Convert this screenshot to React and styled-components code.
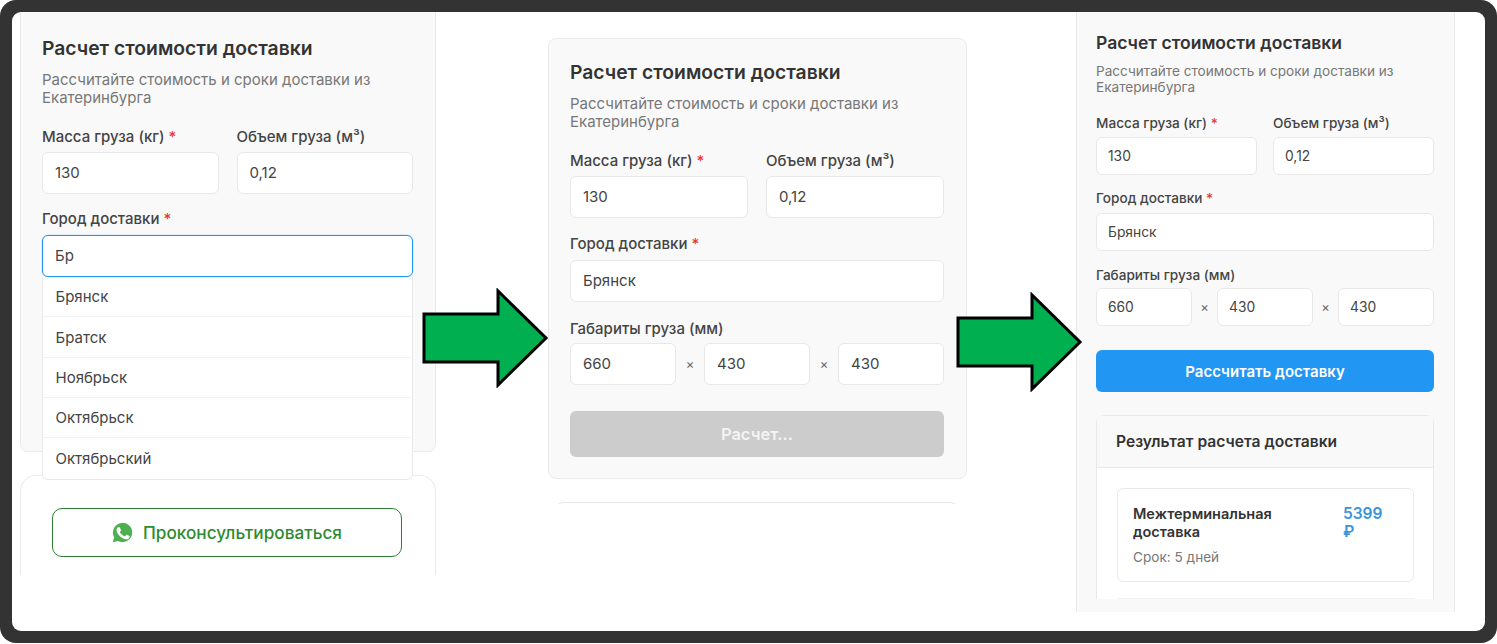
import React from "react";
import styled, { createGlobalStyle, ThemeProvider } from "styled-components";

const regular = {
  pad: "22px", padLeft: "21px", padBottom: "21px", titleSize: "19.3px", titleLine: "22px", titleGap: "12px",
  subSize: "15px", subLine: "18px", labelSize: "15px", labelLine: "18px",
  fieldSize: "15px", fieldLift: "2px", firstGap: "21px", gapCol: "18px", inputH: "42px", inputPad: "12px",
  labelGap: "6px", crossW: "28px", btnGap: "26px", btnH: "46px", btnSize: "16.5px", radius: "6px",
};
const compact = {
  pad: "20px", padLeft: "19px", padBottom: "21px", titleSize: "17.55px", titleLine: "20px", titleGap: "10px",
  subSize: "13.6px", subLine: "16px", labelSize: "13.6px", labelLine: "16px",
  fieldSize: "13.8px", fieldLift: "0px", firstGap: "20px", gapCol: "16px", inputH: "38px", inputPad: "11px",
  labelGap: "6px", crossW: "25px", btnGap: "24px", btnH: "42px", btnSize: "15px", radius: "6px",
};

const Global = createGlobalStyle`
  html, body { margin: 0; background: #fff; }
  body { font-family: Inter, "Noto Sans", sans-serif; color: #333; }
  * { box-sizing: border-box; }
`;

const Frame = styled.div`
  width: 1497px; height: 643px;
  background: #333; border-radius: 16px; padding: 12px;
`;
const Canvas = styled.div`
  position: relative; width: 100%; height: 100%;
  background: #fff; border-radius: 9px; overflow: hidden;
`;
const Shot = styled.div`
  position: absolute; overflow: hidden;
  left: ${(p) => p.$left}px; top: ${(p) => p.$top}px;
  width: ${(p) => p.$width}px; height: ${(p) => p.$height}px;
`;
const Panel = styled.section`
  position: relative;
  background: #f9f9f9;
  border: 1px solid #ebebeb;
  border-top-width: ${(p) => (p.$cut ? 0 : "1px")};
  border-bottom-width: ${(p) => (p.$open ? 0 : "1px")};
  border-radius: ${(p) => (p.$cut ? "0 0 8px 8px" : "8px")};
  padding: ${(p) => p.$top ?? p.theme.pad} ${(p) => p.theme.pad} ${(p) => p.theme.padBottom} ${(p) => p.theme.padLeft};
  min-height: ${(p) => p.$minH ?? "auto"};
`;
const Title = styled.h2`
  margin: 0; font-size: ${(p) => p.theme.titleSize}; line-height: ${(p) => p.theme.titleLine};
  font-weight: 600; color: #333;
`;
const Sub = styled.p`
  margin: ${(p) => p.theme.titleGap} 0 ${(p) => p.theme.firstGap};
  font-size: ${(p) => p.theme.subSize}; line-height: ${(p) => p.theme.subLine}; color: #777;
`;
const Pair = styled.div`
  display: grid; grid-template-columns: 1fr 1fr; column-gap: ${(p) => p.theme.gapCol};
`;
const Label = styled.div`
  font-size: ${(p) => p.theme.labelSize}; line-height: ${(p) => p.theme.labelLine};
  font-weight: 500; color: #444;
  margin-top: ${(p) => p.$gap ?? 0};
  margin-bottom: ${(p) => p.$below ?? p.theme.labelGap};
`;
const Req = styled.span`color: #e53935;`;
const Field = styled.div`
  position: relative; z-index: ${(p) => (p.$focus ? 4 : "auto")};
  height: ${(p) => p.theme.inputH};
  display: flex; align-items: center;
  background: #fff;
  border: 1px solid ${(p) => (p.$focus ? "#2196f3" : "#e8e8e8")};
  box-shadow: ${(p) => (p.$focus ? "0 0 0 1px rgba(33,150,243,.12)" : "none")};
  border-radius: ${(p) => p.theme.radius};
  padding: 0 ${(p) => p.theme.inputPad} ${(p) => p.theme.fieldLift};
  font-size: ${(p) => p.theme.fieldSize}; color: #444;
  flex: 1 1 0; min-width: 0;
`;
const Dims = styled.div`display: flex; align-items: center;`;
const Cross = styled.span`
  width: ${(p) => p.theme.crossW}; text-align: center; font-size: 13px; color: #666; flex: none;
`;
const Submit = styled.div`
  margin-top: ${(p) => p.theme.btnGap}; height: ${(p) => p.theme.btnH};
  display: flex; align-items: center; justify-content: center;
  border-radius: ${(p) => p.theme.radius};
  background: ${(p) => (p.$busy ? "#cccccc" : "#2196f3")};
  color: ${(p) => (p.$busy ? "rgba(255,255,255,.8)" : "#fff")};
  font-size: ${(p) => p.theme.btnSize}; font-weight: 600;
`;
const CityWrap = styled.div`position: relative;`;
const Dropdown = styled.ul`
  position: absolute; top: 100%; left: 0; right: 0; margin: 0; padding: 0; list-style: none;
  background: #fff; border: 1px solid #e9e9e9; border-top: 0; border-radius: 0 0 6px 6px;
  z-index: 3;
`;
const Option = styled.li`
  height: 40.35px; display: flex; align-items: center; padding: 0 12.5px;
  font-size: 15px; color: #444;
  border-bottom: ${(p) => (p.$last ? 0 : "1px solid #f3f3f3")};
`;
const ConsultCard = styled.div`
  margin-top: 23px; background: #fff;
  border: 1px solid #ebebeb; border-bottom: 0; border-radius: 16px 16px 0 0;
  padding: 32px 33px 0 31px; height: 100px;
`;
const WhatsappBtn = styled.div`
  height: 49px; display: flex; align-items: center; justify-content: center; gap: 10px;
  border: 1px solid #2e7d32; border-radius: 10px;
  color: #2e8b2e; font-size: 17.2px; font-weight: 500;
`;
const WhatsappIcon = styled.svg`flex: none; width: 21px; height: 21px;`;
const NextCard = styled.div`
  margin: 23px 4px 0 3px; height: 30px; background: #fff;
  border: 1px solid #e6e6e6; border-bottom: 0; border-radius: 14px 14px 0 0;
`;
const Result = styled.div`
  margin-top: 23px; background: #fff; border: 1px solid #e9e9e9; border-radius: 8px 8px 0 0;
  border-bottom: 0;
`;
const ResultHead = styled.div`
  height: 52px; display: flex; align-items: center; padding: 0 19px;
  background: #f9f9f9; border-bottom: 1px solid #e9e9e9;
  font-size: 15.6px; font-weight: 600; color: #333;
`;
const ResultBody = styled.div`padding: 20px 19px 0 20px;`;
const Offer = styled.div`
  display: flex; justify-content: space-between;
  border: 1px solid #e9e9e9; border-radius: 6px; padding: 16px 15px 15px;
  height: 94px;
`;
const OfferName = styled.div`
  width: 180px; font-size: 14.5px; line-height: 18px; font-weight: 600; color: #333;
`;
const OfferTerm = styled.div`margin-top: 8px; font-size: 13.6px; line-height: 16px; color: #777;`;
const Price = styled.div`
  width: 45px; margin-right: 10px; font-size: 15.5px; line-height: 18px; font-weight: 600; color: #3a94dc;
`;
const Rule = styled.div`margin-top: 16px; height: 1px; background: #f1f1f1;`;
const Arrow = styled.svg`
  position: absolute; left: ${(p) => p.$left}px; top: ${(p) => p.$top}px; z-index: 5;
`;

function GreenArrow({ left, top }) {
  return (
    <Arrow $left={left} $top={top} width="127" height="100" viewBox="0 0 127 100">
      <path d="M2 26 H76 V3 L124 50 L76 97 V74 H2 Z" fill="#00b050" stroke="#000" strokeWidth="3" />
    </Arrow>
  );
}

const Whatsapp = () => (
  <WhatsappIcon viewBox="0 0 24 24">
    <path d="M12 1a11 11 0 0 0-9.5 16.5L.8 23.2l5.9-1.6A11 11 0 1 0 12 1z" fill="#4caf50" />
    <path
      d="M9 6.5c-.3-.6-.5-.6-.8-.6h-.7c-.3 0-.7.1-1 .5-.4.4-1.3 1.3-1.3 3.1s1.3 3.6 1.5 3.9c.2.2 2.6 4 6.3 5.5 3.1 1.2 3.7 1 4.4.9.7-.1 2.2-.9 2.5-1.8.3-.9.3-1.6.2-1.8-.1-.2-.3-.2-.7-.4l-2.5-1.2c-.3-.1-.6-.2-.8.2-.2.4-.9 1.2-1.1 1.4-.2.2-.4.3-.8.1-.4-.2-1.6-.6-3-1.9-1.1-1-1.9-2.2-2.1-2.6-.2-.4 0-.6.2-.8l.6-.7c.2-.2.2-.4.4-.6.1-.2.1-.5 0-.7L9 6.5z"
      fill="#fff"
    />
  </WhatsappIcon>
);

const MassVolume = () => (
  <Pair>
    <div>
      <Label>Масса груза (кг) <Req>*</Req></Label>
      <Field>130</Field>
    </div>
    <div>
      <Label>Объем груза (м³)</Label>
      <Field>0,12</Field>
    </div>
  </Pair>
);
const Intro = () => (
  <>
    <Title>Расчет стоимости доставки</Title>
    <Sub>Рассчитайте стоимость и сроки доставки из Екатеринбурга</Sub>
  </>
);
const SizeRow = () => (
  <Dims>
    <Field>660</Field><Cross>×</Cross><Field>430</Field><Cross>×</Cross><Field>430</Field>
  </Dims>
);
const CityLabel = ({ gap = "16px", below = "7px" }) => (
  <Label $gap={gap} $below={below}>Город доставки <Req>*</Req></Label>
);

const cities = ["Брянск", "Братск", "Ноябрьск", "Октябрьск", "Октябрьский"];

export default function App() {
  return (
    <>
      <Global />
      <Frame>
        <Canvas>
          <ThemeProvider theme={regular}>
            <Shot $left={8} $top={0} $width={416} $height={563}>
              <Panel $cut $top="25px" $minH="440px">
                <Intro />
                <MassVolume />
                <CityLabel />
                <CityWrap>
                  <Field $focus>Бр</Field>
                  <Dropdown>
                    {cities.map((c, i) => (
                      <Option key={c} $last={i === cities.length - 1}>{c}</Option>
                    ))}
                  </Dropdown>
                </CityWrap>
              </Panel>
              <ConsultCard>
                <WhatsappBtn>
                  <Whatsapp />
                  Проконсультироваться
                </WhatsappBtn>
              </ConsultCard>
            </Shot>

            <Shot $left={536} $top={26} $width={419} $height={466}>
              <Panel>
                <Intro />
                <MassVolume />
                <CityLabel gap="17px" />
                <Field>Брянск</Field>
                <Label $gap="18px" $below="5px">Габариты груза (мм)</Label>
                <SizeRow />
                <Submit $busy>Расчет...</Submit>
              </Panel>
              <NextCard />
            </Shot>
          </ThemeProvider>

          <ThemeProvider theme={compact}>
            <Shot $left={1064} $top={0} $width={379} $height={600}>
              <Panel $cut $open $top="21px">
                <Intro />
                <MassVolume />
                <CityLabel gap="15px" />
                <Field>Брянск</Field>
                <Label $gap="16px" $below="5px">Габариты груза (мм)</Label>
                <SizeRow />
                <Submit>Рассчитать доставку</Submit>
                <Result>
                  <ResultHead>Результат расчета доставки</ResultHead>
                  <ResultBody>
                    <Offer>
                      <div>
                        <OfferName>Межтерминальная доставка</OfferName>
                        <OfferTerm>Срок: 5 дней</OfferTerm>
                      </div>
                      <Price>5399 ₽</Price>
                    </Offer>
                    <Rule />
                  </ResultBody>
                </Result>
              </Panel>
            </Shot>
          </ThemeProvider>

          <GreenArrow left={410} top={276} />
          <GreenArrow left={944} top={280} />
        </Canvas>
      </Frame>
    </>
  );
}
